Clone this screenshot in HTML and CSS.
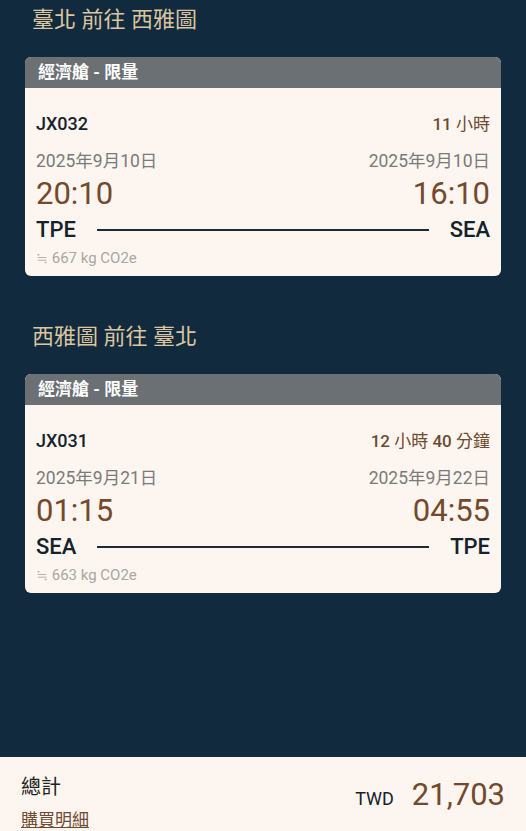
FILE: index.html
```html
<!DOCTYPE html>
<html lang="zh-Hant">
<head>
    <meta charset="UTF-8">
    <meta name="viewport" content="width=device-width, initial-scale=1.0">
    <title>行程摘要</title>
    <link rel="stylesheet" href="styles.css">
</head>
<body>
    <div class="trips">
        <!-- 去程 -->
        <div class="leg">
            <div class="leg-title">臺北 前往 西雅圖</div>
            <div class="card">
                <div class="card-head">經濟艙 - 限量</div>
                <div class="card-body">
                    <div class="row flight-row">
                        <span class="flight-no">JX032</span>
                        <span class="duration"><b>11</b> 小時</span>
                    </div>
                    <div class="row date-row">
                        <span>2025年9月10日</span>
                        <span>2025年9月10日</span>
                    </div>
                    <div class="row time-row">
                        <span>20:10</span>
                        <span>16:10</span>
                    </div>
                    <div class="row airport-row">
                        <span>TPE</span>
                        <span class="route-line"></span>
                        <span>SEA</span>
                    </div>
                    <div class="co2">≒ 667 kg CO2e</div>
                </div>
            </div>
        </div>

        <!-- 回程 -->
        <div class="leg">
            <div class="leg-title">西雅圖 前往 臺北</div>
            <div class="card">
                <div class="card-head">經濟艙 - 限量</div>
                <div class="card-body">
                    <div class="row flight-row">
                        <span class="flight-no">JX031</span>
                        <span class="duration"><b>12</b> 小時 <b>40</b> 分鐘</span>
                    </div>
                    <div class="row date-row">
                        <span>2025年9月21日</span>
                        <span>2025年9月22日</span>
                    </div>
                    <div class="row time-row">
                        <span>01:15</span>
                        <span>04:55</span>
                    </div>
                    <div class="row airport-row">
                        <span>SEA</span>
                        <span class="route-line"></span>
                        <span>TPE</span>
                    </div>
                    <div class="co2">≒ 663 kg CO2e</div>
                </div>
            </div>
        </div>
    </div>

    <div class="total-bar">
        <div class="total-left">
            <div class="total-label">總計</div>
            <a class="detail-link" href="#">購買明細</a>
        </div>
        <div class="total-price">
            <span class="currency">TWD</span>
            <span class="amount">21,703</span>
        </div>
    </div>
</body>
</html>
```

FILE: styles.css
```css
html, body {
    height: 100%;
}
body {
    margin: 0;
    display: flex;
    flex-direction: column;
    background-color: #112a3d;
    font-family: Roboto, "Noto Sans CJK TC", sans-serif;
    color: #15222c;
}
.trips {
    flex: 1;
    padding: 5px 25px 0 25px;
}
.leg + .leg {
    margin-top: 46px;
}
.leg-title {
    font-size: 22px;
    line-height: 30px;
    color: #dcc6a0;
    padding-left: 7px;
    margin-bottom: 22px;
}
.card {
    background: #fdf6f0;
    border-radius: 6px;
    overflow: hidden;
}
.card-head {
    background: #6b7075;
    color: #fff;
    font-size: 17px;
    font-weight: bold;
    line-height: 31px;
    padding-left: 13px;
}
.card-body {
    padding: 24px 11px 4px 11px;
}
.row {
    display: flex;
    justify-content: space-between;
    align-items: center;
}
.flight-row {
    line-height: 24px;
}
.flight-no {
    font-size: 18px;
    font-weight: 500;
}
.duration {
    font-size: 17px;
    color: #6e4a30;
}
.duration b {
    font-weight: 500;
}
.date-row {
    margin-top: 14px;
    line-height: 22px;
    font-size: 17.5px;
    color: #7a7a7a;
}
.time-row {
    line-height: 44px;
    font-size: 31px;
    color: #74492c;
}
.airport-row {
    line-height: 28px;
    font-size: 22px;
    font-weight: 500;
}
.route-line {
    flex: 1;
    height: 2px;
    background: #1c2a35;
    margin: 0 21px;
}
.co2 {
    line-height: 28px;
    font-size: 15px;
    color: #a9a6a3;
}
.total-bar {
    height: 74px;
    box-sizing: border-box;
    background: #fdf6f0;
    display: flex;
    justify-content: space-between;
    align-items: flex-start;
    padding: 18px 21px 0 21px;
}
.total-label {
    font-size: 20px;
    line-height: 24px;
    color: #222;
}
.detail-link {
    display: block;
    margin-top: 10px;
    font-size: 17px;
    line-height: 22px;
    color: #6e4a30;
}
.total-price {
    display: flex;
    align-items: baseline;
    margin-top: 2px;
}
.currency {
    font-size: 18px;
    margin-right: 18px;
}
.amount {
    font-size: 31px;
    line-height: 36px;
    color: #74492c;
}
```
